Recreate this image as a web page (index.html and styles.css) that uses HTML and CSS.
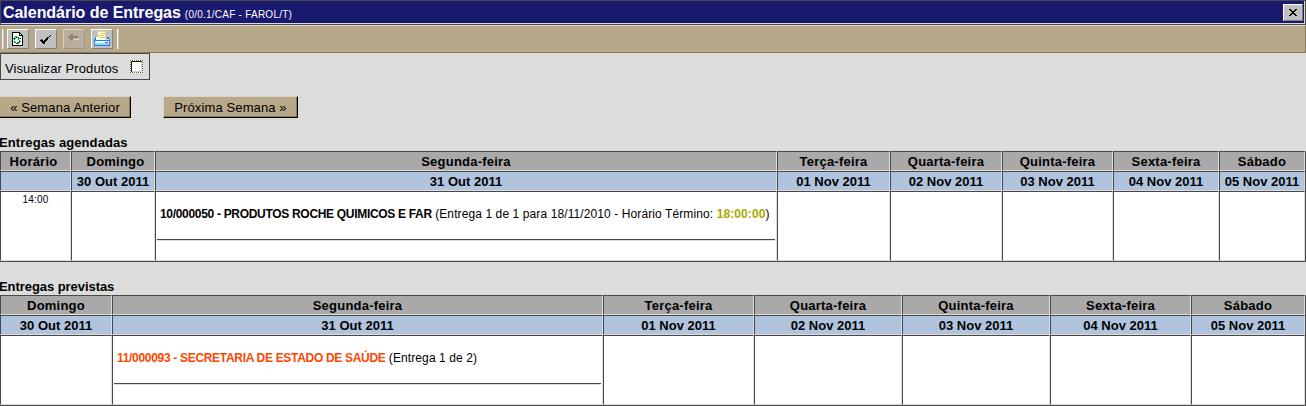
FILE: index.html
```html
<!DOCTYPE html>
<html lang="pt-BR">
<head>
<meta charset="utf-8">
<title>Calendário de Entregas</title>
<link rel="stylesheet" href="styles.css">
</head>
<body>
<header class="titlebar">
  <div class="title"><b class="title-name">Calendário de Entregas</b><span class="title-code">(0/0.1/CAF - FAROL/T)</span></div>
  <button class="close" aria-label="Fechar"><svg width="8" height="7" viewBox="0 0 8 7" shape-rendering="crispEdges"><path d="M0 0h2v1h1v1h2v-1h1v-1h2v1h-1v1h-1v1h-1v1h1v1h1v1h1v1h-2v-1h-1v-1h-2v1h-1v1h-2v-1h1v-1h1v-1h1v-1h-1v-1h-1v-1h-1z"/></svg></button>
</header>
<nav class="toolbar">
  <i class="grip"></i>
  <button class="tool" aria-label="Atualizar"><svg width="20" height="18" viewBox="0 0 20 18" shape-rendering="crispEdges"><path fill="#000" d="M4 2h8v1h1v1h1v1h1v11H4z"/><path fill="#fff" d="M5 3h6v3h3v9H5z"/><path fill="#fff" d="M12 4h1v1h-1z"/><path fill="#008a20" d="M7 6h2v1h2v1h1v1h-1v1h-1V8H8V7H7zM6 7h1v1h1v1H7v1H6V9H5V8h1zM12 8h1v1h-1zM6 11h1v1h1v1h2v1H8v-1H6zM11 10h1v1h1v1h-1v1h-1v1h-1v-1H9v-1h2z"/></svg></button>
  <button class="tool" aria-label="Confirmar"><svg width="20" height="18" viewBox="0 0 20 18" shape-rendering="crispEdges"><path fill="#000" d="M14 5h1v1h-1v1h-1v1h-1v2h-1v1h-1v1h-1v2H7v-1H6v-1H5v-1H4v-1h1V9h1v1h1v1h1v-1h1V9h1V8h1V7h2V6h1z"/></svg></button>
  <button class="tool off" aria-label="Voltar"><svg width="20" height="18" viewBox="0 0 20 18" shape-rendering="crispEdges"><path fill="#d8d0c4" d="M8 11h2v-1h5V8h-1v1H9v2z"/><path fill="#8b8378" d="M4 7h1V6h1V5h1V4h2v2h5v2H9v3H7v-1H6V9H5V8H4z"/></svg></button>
  <button class="tool" aria-label="Imprimir"><svg width="20" height="18" viewBox="0 0 20 18" shape-rendering="crispEdges"><path fill="#fffde0" d="M6 1h8v9H4V7h2z"/><path fill="#e0cc68" d="M8 3h5v1H8zM7 5h5v1H7zM7 7h6v1H7z"/><path fill="#e8d890" d="M6 1h8v1H6zM13 2h1v7h-1z"/><path fill="#1089e8" d="M3 7h1v3h11V7h2v2h1v7H2V9h1z"/><path fill="#e4f6ff" d="M3 11h14v4H3zM15 9h2v1h-2z"/><path fill="#90d4ff" d="M3 13h14v2H3z"/><path fill="#ef3030" d="M13 12h3v1h-3z"/></svg></button>
  <i class="grip end"></i>
</nav>
<main>
  <label class="option"><span>Visualizar Produtos</span><i class="check"></i></label>
  <div class="weeks">
    <button class="week prev"><span>« Semana Anterior</span></button>
    <button class="week next"><span>Próxima Semana »</span></button>
  </div>
  <h2>Entregas agendadas</h2>
  <section class="calendar scheduled">
    <div class="day first">Horário</div><div class="day second">Domingo</div><div class="day">Segunda-feira</div><div class="day">Terça-feira</div><div class="day">Quarta-feira</div><div class="day">Quinta-feira</div><div class="day">Sexta-feira</div><div class="day">Sábado</div>
    <div class="date"></div><div class="date">30 Out 2011</div><div class="date">31 Out 2011</div><div class="date">01 Nov 2011</div><div class="date">02 Nov 2011</div><div class="date">03 Nov 2011</div><div class="date">04 Nov 2011</div><div class="date">05 Nov 2011</div>
    <div class="slot hour">14:00</div><div class="slot"></div><div class="slot"><p><b class="order">10/000050 - PRODUTOS ROCHE QUIMICOS E FAR</b> <span class="note">(Entrega 1 de 1 para 18/11/2010 - Horário Término: <b class="end-time">18:00:00</b>)</span></p><hr></div><div class="slot"></div><div class="slot"></div><div class="slot"></div><div class="slot"></div><div class="slot"></div>
  </section>
  <h2 class="tight">Entregas previstas</h2>
  <section class="calendar expected">
    <div class="day">Domingo</div><div class="day">Segunda-feira</div><div class="day">Terça-feira</div><div class="day">Quarta-feira</div><div class="day">Quinta-feira</div><div class="day">Sexta-feira</div><div class="day">Sábado</div>
    <div class="date">30 Out 2011</div><div class="date">31 Out 2011</div><div class="date">01 Nov 2011</div><div class="date">02 Nov 2011</div><div class="date">03 Nov 2011</div><div class="date">04 Nov 2011</div><div class="date">05 Nov 2011</div>
    <div class="slot"></div><div class="slot"><p><b class="order late">11/000093 - SECRETARIA DE ESTADO DE SAÚDE</b> <span class="note">(Entrega 1 de 2)</span></p><hr></div><div class="slot"></div><div class="slot"></div><div class="slot"></div><div class="slot"></div><div class="slot"></div>
  </section>
</main>
</body>
</html>
```
FILE: styles.css
```css
* { box-sizing: border-box; }
body {
  margin: 0;
  width: 1306px;
  height: 406px;
  overflow: hidden;
  background: #dcdcdc;
  color: #000;
  font-family: "Liberation Sans", Arial, sans-serif;
}
button { padding: 0; margin: 0; font: inherit; color: inherit; border-radius: 0; }
svg { display: block; }
.titlebar {
  display: flex;
  justify-content: space-between;
  height: 25px;
  padding: 3px 2px 0 1px;
  background: #191970;
  border: 1px solid #484848;
  box-shadow: inset -1px -1px #dcdcdc;
  color: #fff;
  white-space: nowrap;
}
.title { line-height: 18px; padding-left: 1px; }
.title-name { font-size: 16px; letter-spacing: -.04px; }
.title-code { font-size: 10px; margin-left: 4px; letter-spacing: .24px; }
.close {
  display: flex;
  align-items: center;
  justify-content: center;
  width: 20px;
  height: 17px;
  background: #c0c0c0;
  border: 1px solid;
  border-color: #fff #808080 #808080 #fff;
}
.toolbar {
  display: flex;
  height: 28px;
  padding: 3px 0 0 1px;
  background: #b8a88a;
  border: 1px solid;
  border-color: #e5ddd0 #8c7853 #8c7853 #b8a88a;
}
.grip { width: 2px; height: 20px; background: #fff; border-right: 1px solid #c0c0c0; margin-right: 3px; }
.grip.end { margin-left: 4px; }
.tool {
  width: 22px;
  height: 20px;
  background: #c0c0c0;
  border: 1px solid;
  border-color: #fff #808080 #808080 #fff;
  margin-right: 6px;
}
.tool:last-of-type { margin-right: 0; }
.tool.off { background: #b9ada0; border-color: #d8d0c4 #a09484 #a09484 #d8d0c4; }
.option {
  display: flex;
  width: 150px;
  height: 27px;
  padding: 0 0 0 4px;
  border: 1px solid #484848;
  box-shadow: inset -1px -1px #dcdcdc;
  font-size: 13px;
  line-height: 29px;
  white-space: nowrap;
  letter-spacing: .08px;
}
.option span { width: 125px; }
.check {
  width: 13px;
  height: 13px;
  margin-top: 6px;
  background: #fff;
  border: 1px dotted #6b5a3c;
  box-shadow: inset 1px 1px #202020, inset -1px -1px #d4d0c8;
}
.weeks { display: flex; gap: 32px; margin-top: 16px; }
.week {
  height: 22px;
  font-size: 13px;
  letter-spacing: .12px;
  background: #b8a88a;
  border: 1px solid;
  border-color: #dcd4c5 #000 #000 #dcd4c5;
  box-shadow: inset -1px -1px #8c7853;
  white-space: nowrap;
}
.prev { width: 131px; border-left: 0; }
.next { width: 135px; }
h2 {
  height: 15px;
  margin: 17px 0 1px;
  font-size: 13px;
  line-height: 15px;
  letter-spacing: .08px;
  text-indent: -1px;
}
.tight { letter-spacing: -.06px; }
.calendar {
  display: grid;
  width: 1306px;
  border-right: 1px solid #484848;
  border-bottom: 1px solid #484848;
  white-space: nowrap;
}
.scheduled { height: 111px; grid-template: 20px 20px 70px / 71px 84px 622px 113px 112px 111px 106px 86px; }
.expected { height: 111px; grid-template: 20px 20px 70px / 112px 491px 151px 148px 148px 141px 114px; }
.calendar > div {
  border: 1px solid;
  border-color: #484848 #dcdcdc #dcdcdc #484848;
  min-width: 0;
}
.day, .date {
  font-size: 13px;
  font-weight: bold;
  line-height: 19px;
  text-align: center;
  letter-spacing: .22px;
}
.day { background: #a9a9a9; }
.day.first { padding-right: 4px; }
.day.second { padding-left: 5px; }
.date { background: #b0c4de; letter-spacing: 0; }
.slot { background: #fff; padding: 0 1px; }
.hour { font-size: 10px; line-height: 16px; text-align: center; letter-spacing: .2px; }
.slot p { margin: 14px 0 0 3px; font-size: 12px; line-height: 16px; }
.order { letter-spacing: -.31px; }
.note { letter-spacing: .1px; }
.late { color: #ff4500; }
.end-time { color: #aaaa00; }
hr { height: 2px; margin: 17px 0 0; border: 0; background: #dcdcdc; border-top: 1px solid #484848; }
```
